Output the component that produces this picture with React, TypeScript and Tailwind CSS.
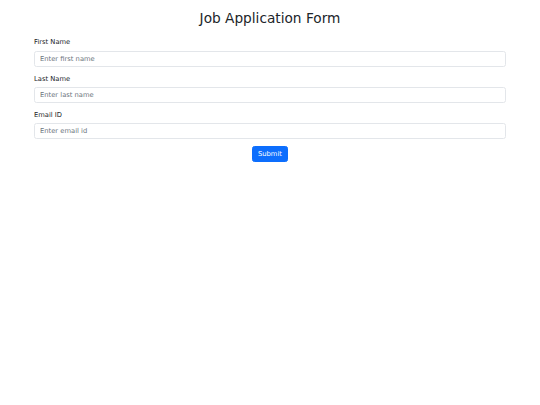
import React, { useState } from 'react';

const fields = [
  { id: 'firstName', label: 'First Name', placeholder: 'Enter first name', type: 'text' },
  { id: 'lastName', label: 'Last Name', placeholder: 'Enter last name', type: 'text' },
  { id: 'email', label: 'Email ID', placeholder: 'Enter email id', type: 'email' },
];

export default function App() {
  const [values, setValues] = useState<Record<string, string>>({});

  return (
    <div className="min-h-screen w-full bg-white text-[#212529] font-['DejaVu_Sans',sans-serif]">
      <div className="mx-auto w-[482px] px-[5px]">
        <h2 className="pt-[10px] mb-[11px] text-center text-[13.7px] leading-[1.2] font-normal">
          Job Application Form
        </h2>
        <form onSubmit={(e) => e.preventDefault()}>
          {fields.map((f) => (
            <div key={f.id} className="mb-[6.75px]">
              <label htmlFor={f.id} className="block mb-[3.4px] text-[6.75px] leading-[1.5]">
                {f.label}
              </label>
              <input
                id={f.id}
                type={f.type}
                placeholder={f.placeholder}
                value={values[f.id] ?? ''}
                onChange={(e) => setValues({ ...values, [f.id]: e.target.value })}
                className="block w-full h-[16px] px-[5px] py-[2.5px] text-[6.75px] leading-[1.5] border border-[#e3e6ea] rounded-[2.5px] bg-white placeholder:text-[#6c757d] outline-none"
              />
            </div>
          ))}
          <div className="flex justify-center">
            <button
              type="submit"
              className="h-[16px] px-[5px] text-[6.75px] leading-[1.5] text-white bg-[#0d6efd] border border-[#0d6efd] rounded-[2.5px]"
            >
              Submit
            </button>
          </div>
        </form>
      </div>
    </div>
  );
}
